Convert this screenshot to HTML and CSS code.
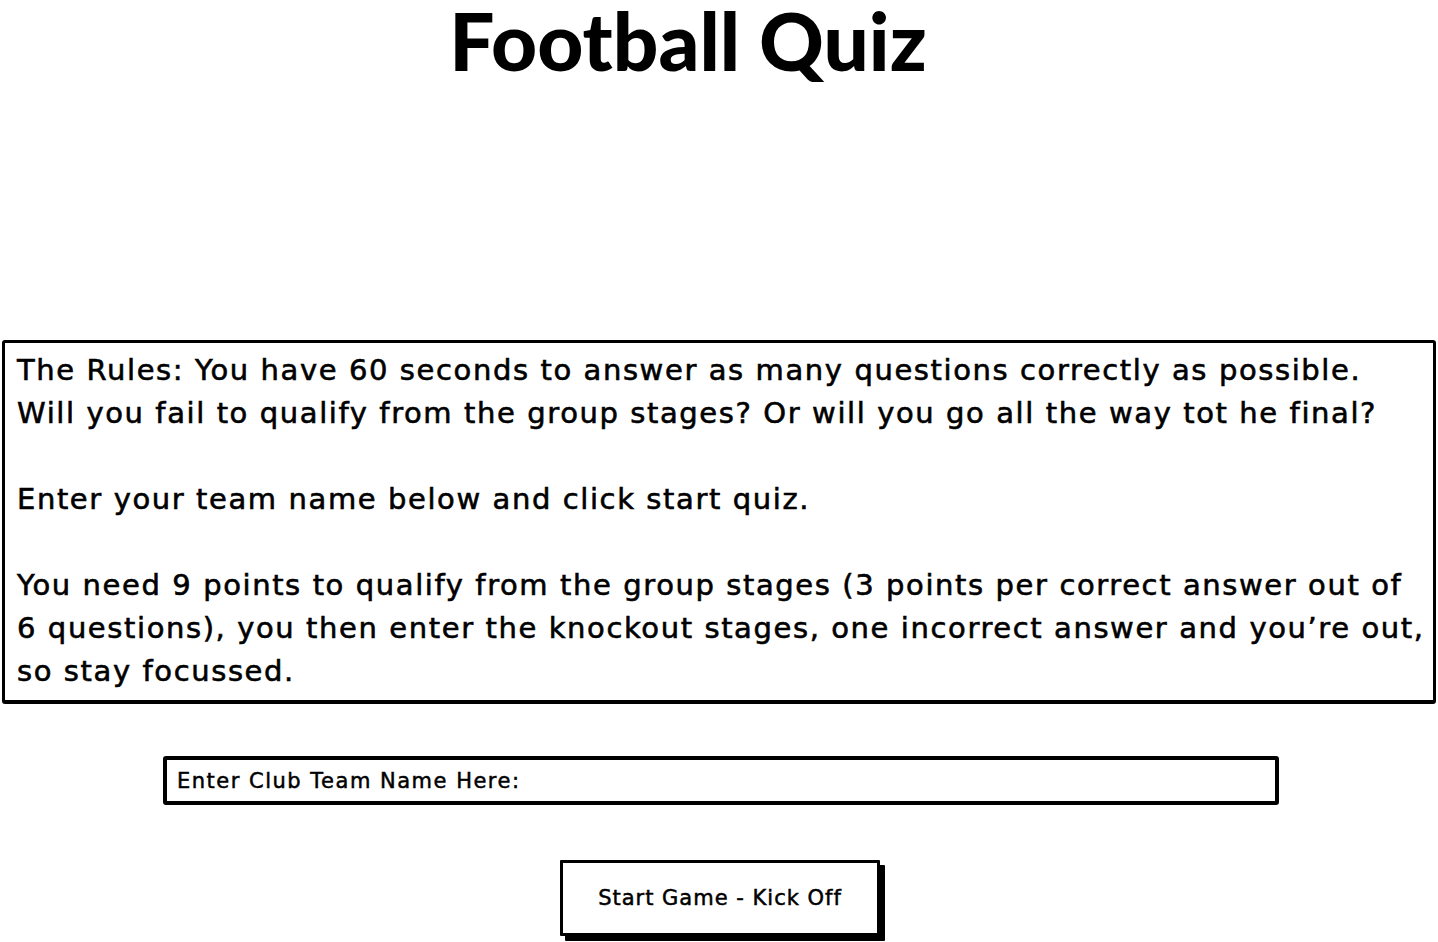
FILE: index.html
```html
<!DOCTYPE html>
<html>
<head>
<meta charset="utf-8">
<link rel="stylesheet" href="styles.css">
</head>
<body>
<div class="page">
  <header class="title-wrap">
    <h1 class="title">Football Quiz</h1>
  </header>
  <section class="rules">
    <p>The Rules: You have 60 seconds to answer as many questions correctly as possible.<br>Will you fail to qualify from the group stages? Or will you go all the way tot he final?</p>
    <p>Enter your team name below and click start quiz.</p>
    <p>You need 9 points to qualify from the group stages (3 points per correct answer out of 6 questions), you then enter the knockout stages, one incorrect answer and you’re out, so stay focussed.</p>
  </section>
  <div class="input-row">
    <div class="team-input">Enter Club Team Name Here:</div>
  </div>
  <div class="button-row">
    <button class="start-btn">Start Game - Kick Off</button>
  </div>
</div>
</body>
</html>
```

FILE: styles.css
```css
* { box-sizing: border-box; }
html, body { margin: 0; padding: 0; background: #fff; }
body {
  font-family: "DejaVu Sans", "Open Sans", sans-serif;
  color: #000;
  width: 1438px;
  height: 942px;
  overflow: hidden;
}
.page {
  display: flex;
  flex-direction: column;
}
.title-wrap {
  display: flex;
  justify-content: center;
  align-items: flex-start;
  padding-right: 62px;
  height: 340px;
}
.title {
  margin: 0;
  padding-bottom: 12px;
  font-family: "Lato", sans-serif;
  font-size: 80px;
  font-weight: 900;
  line-height: 80px;
}
.rules {
  margin: 0 2px 0 2px;
  height: 364px;
  border: 3px solid #000;
  border-bottom-width: 4px;
  border-radius: 3px;
  padding: 6px 8px 0 12px;
  font-size: 29px;
  font-weight: normal;
  line-height: 43px;
  letter-spacing: 1.6px;
  -webkit-text-stroke: 0.6px #000;
}
.rules p { margin: 0 0 43px 0; }
.rules p:last-child { margin-bottom: 0; }
.input-row {
  display: flex;
  justify-content: center;
  padding-top: 52px;
  padding-left: 4px;
}
.team-input {
  width: 1116px;
  height: 49px;
  border: 4px solid #000;
  border-radius: 3px;
  padding: 0 0 0 10px;
  display: flex;
  align-items: center;
  font-size: 21px;
  letter-spacing: 1.5px;
  -webkit-text-stroke: 0.5px #000;
}
.button-row {
  display: flex;
  justify-content: center;
  padding-top: 55px;
  padding-left: 2px;
}
.start-btn {
  width: 320px;
  height: 76px;
  background: #fff;
  border: 3px solid #000;
  border-radius: 1px;
  box-shadow: 5px 5px 0 #000;
  font-family: "DejaVu Sans", "Open Sans", sans-serif;
  font-size: 21px;
  letter-spacing: 1px;
  -webkit-text-stroke: 0.5px #000;
  color: #000;
  padding: 0;
}
```
